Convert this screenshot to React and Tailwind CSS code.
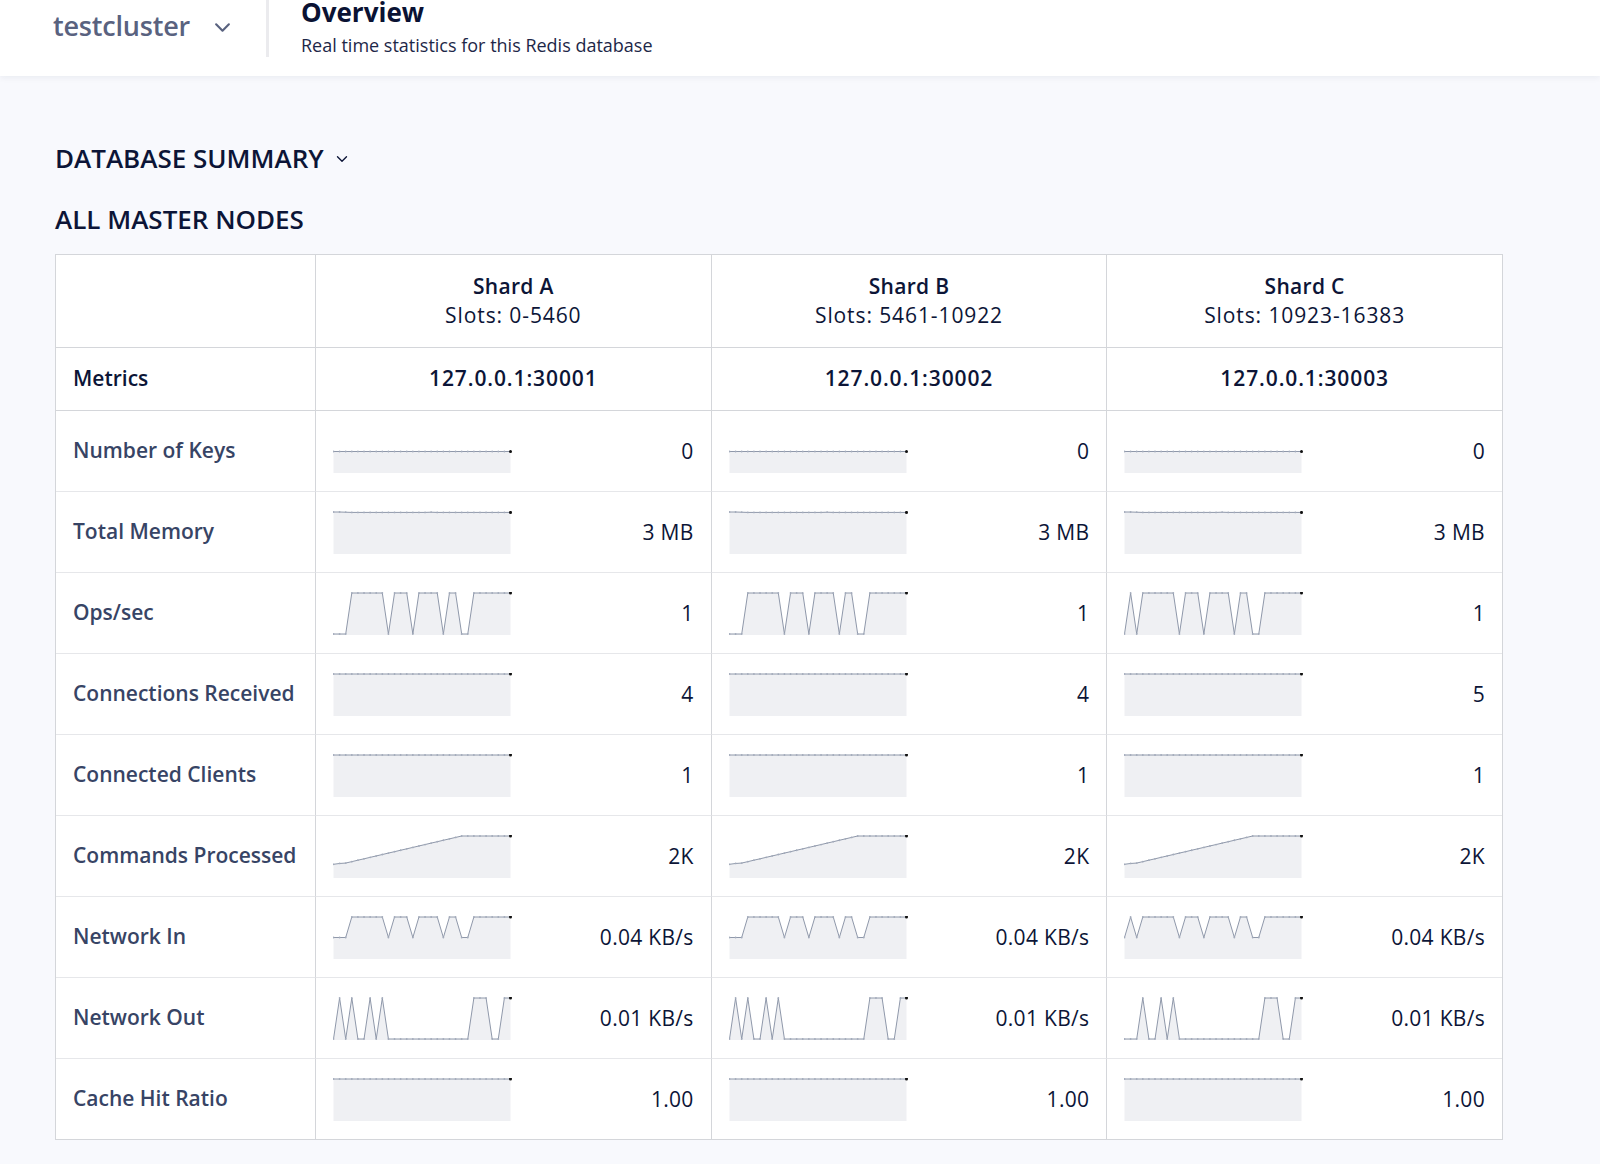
import React from 'react';

const FONT = { fontFamily: '"Open Sans", Lato, sans-serif' };

const ops = [0,0,0,1,1,1,1,1,1,0,1,1,1,0,1,1,1,1,0,1,1,0,0,1,1,1,1,1,1,1];
const opsC = [0,1,0,1,1,1,1,1,1,0,1,1,1,0,1,1,1,1,0,1,1,0,0,1,1,1,1,1,1,1];
const netOut = [0,1,0,1,0,0,1,0,1,0,0,0,0,0,0,0,0,0,0,0,0,0,0,1,1,1,0,0,1,1];
const netOutC = [0,0,0,1,0,0,1,0,1,0,0,0,0,0,0,0,0,0,0,0,0,0,0,1,1,1,0,0,1,1];
const flat = Array(30).fill(1);
const memory = [1,1,0.995,0.99,0.99,0.99,0.99,0.99,0.99,0.99,0.99,0.99,0.99,0.99,0.99,0.99,0.995,0.99,0.99,0.99,0.99,0.99,0.99,0.99,0.99,0.99,0.99,0.99,0.99,0.99];
const commands = Array.from({ length: 30 }, (_, i) => {
  if (i === 0) return 0.31;
  if (i === 1) return 0.33;
  if (i >= 21) return 1;
  return 0.34 + ((i - 2) / 19) * 0.66;
});
const half = (arr) => arr.map((v) => (v ? 1 : 0.5));

const shards = [
  { name: 'Shard A', slots: '0-5460', host: '127.0.0.1:30001' },
  { name: 'Shard B', slots: '5461-10922', host: '127.0.0.1:30002' },
  { name: 'Shard C', slots: '10923-16383', host: '127.0.0.1:30003' },
];

const metrics = [
  { label: 'Number of Keys', data: [flat, flat, flat], mid: true, values: ['0', '0', '0'] },
  { label: 'Total Memory', data: [memory, memory, memory], values: ['3 MB', '3 MB', '3 MB'] },
  { label: 'Ops/sec', data: [ops, ops, opsC], values: ['1', '1', '1'] },
  { label: 'Connections Received', data: [flat, flat, flat], values: ['4', '4', '5'] },
  { label: 'Connected Clients', data: [flat, flat, flat], values: ['1', '1', '1'] },
  { label: 'Commands Processed', data: [commands, commands, commands], values: ['2K', '2K', '2K'] },
  { label: 'Network In', data: [half(ops), half(ops), half(opsC)], values: ['0.04 KB/s', '0.04 KB/s', '0.04 KB/s'] },
  { label: 'Network Out', data: [netOut, netOut, netOutC], values: ['0.01 KB/s', '0.01 KB/s', '0.01 KB/s'] },
  { label: 'Cache Hit Ratio', data: [flat, flat, flat], values: ['1.00', '1.00', '1.00'] },
];

const Sparkline = ({ data, mid }) => {
  const w = 178;
  const h = 43;
  const pts = data.map((v, i) => {
    const x = 0.5 + (i * (w - 1)) / (data.length - 1);
    const y = mid ? 21.5 : 1 + (1 - v) * (h - 2);
    return [x, y];
  });
  const line = pts.map((p) => p.join(',')).join(' ');
  const area = `0.5,${h} ${line} ${w - 0.5},${h}`;
  const last = pts[pts.length - 1];
  return (
    <svg width={w + 2} height={h} className="shrink-0">
      <polygon points={area} fill="#eff0f3" />
      <polyline points={line} fill="none" stroke="#8f98aa" strokeWidth="1" />
      {pts.map(([x, y], i) => (
        <circle key={i} cx={x} cy={y} r="0.9" fill="#a3abbb" />
      ))}
      <circle cx={last[0]} cy={last[1]} r="1.5" fill="#111" />
    </svg>
  );
};

const Chevron = ({ className, strokeWidth = 2 }) => (
  <svg viewBox="0 0 16 10" className={className} fill="none" stroke="currentColor" strokeWidth={strokeWidth} strokeLinecap="round" strokeLinejoin="round">
    <path d="M2 2l6 6 6-6" />
  </svg>
);

export default function App() {
  return (
    <div className="min-h-[1164px] bg-[#f8f9fd] text-[#0c1537]" style={FONT}>
      <header className="h-[76px] bg-white shadow-[0_2px_6px_rgba(20,30,60,0.06)] flex items-start">
        <div className="flex items-center pl-[53px] pt-[10px] w-[266px]">
          <span className="text-[27px] font-semibold tracking-[-0.2px] text-[#59627f] leading-[32px]">testcluster</span>
          <Chevron className="w-[17px] h-[11px] ml-[24px] mt-[2px] text-[#59627f]" />
        </div>
        <div className="w-[3px] h-[57px] bg-[#ebebee]" />
        <div className="pl-[32px] -mt-[4px]">
          <div className="text-[26px] font-bold leading-[32px] text-[#0a1233]">Overview</div>
          <div className="text-[18px] leading-[24px] mt-[5px] text-[#1d2748]">Real time statistics for this Redis database</div>
        </div>
      </header>

      <main className="pl-[55px] pt-[66px] pb-[25px]">
        <div className="flex items-center h-[32px]">
          <h2 className="text-[26px] font-semibold leading-[32px]">DATABASE SUMMARY</h2>
          <Chevron className="w-[12px] h-[8px] ml-[12px] mt-[2px]" strokeWidth={1.8} />
        </div>
        <h2 className="text-[26px] font-semibold leading-[32px] mt-[29px]">ALL MASTER NODES</h2>

        <div className="mt-[19px] w-[1448px] border border-[#d4d6da] bg-white grid grid-cols-[259px_1fr_1fr_1fr]">
          <div className="h-[92px]" />
          {shards.map((s) => (
            <div key={s.name} className="h-[92px] border-l border-[#d4d6da] flex flex-col items-center justify-center">
              <div className="text-[21px] font-semibold tracking-[0.3px] leading-[29px]">{s.name}</div>
              <div className="text-[21px] tracking-[0.9px] leading-[29px]">Slots: {s.slots}</div>
            </div>
          ))}

          <div className="h-[63px] border-t border-[#d4d6da] flex items-center pl-[17px] text-[21px] font-semibold">Metrics</div>
          {shards.map((s) => (
            <div key={s.host} className="h-[63px] border-t border-l border-[#d4d6da] flex items-center justify-center text-[21px] tracking-[0.9px] font-semibold">
              {s.host}
            </div>
          ))}

          {metrics.map((m, ri) => (
            <React.Fragment key={m.label}>
              <div className={`h-[81px] border-t flex items-center pl-[17px] text-[21px] font-semibold text-[#374465] ${ri === 0 ? 'border-[#d4d6da]' : 'border-[#e6e7ea]'}`}>
                {m.label}
              </div>
              {m.data.map((d, ci) => (
                <div
                  key={ci}
                  className={`h-[81px] border-t border-l flex items-center justify-between pl-[17px] pr-[17px] ${ri === 0 ? 'border-t-[#d4d6da]' : 'border-t-[#e6e7ea]'} border-l-[#d4d6da]`}
                >
                  <Sparkline data={d} mid={m.mid} />
                  <span className="text-[21px] tracking-[0.3px] leading-none">{m.values[ci]}</span>
                </div>
              ))}
            </React.Fragment>
          ))}
        </div>
      </main>
    </div>
  );
}
